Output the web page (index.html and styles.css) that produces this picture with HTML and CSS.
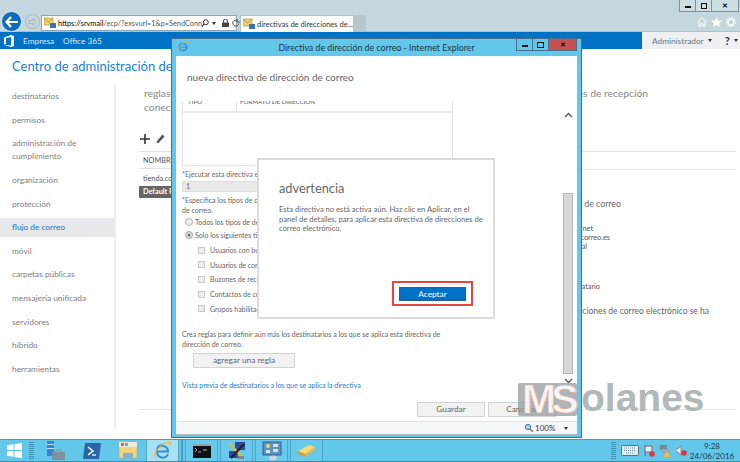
FILE: index.html
```html
<!DOCTYPE html>
<html lang="es">
<head>
    <meta charset="UTF-8">
    <title>directivas de direcciones de correo</title>
    <link rel="stylesheet" href="styles.css">
</head>
<body>
    <div class="ie-bar">
        <div class="nav-btns">
            <div class="back">
                <svg width="14" height="12" viewBox="0 0 14 12"><path d="M6 1L1.500 6 6 11M2 6H13" fill="none" stroke="#fff" stroke-width="2.200"/></svg>
            </div>
            <div class="forward">
                <svg width="9" height="8" viewBox="0 0 9 8"><path d="M5 .5L8 4 5 7.500V5.500H1V2.500H5Z" fill="none" stroke="#a9b6bc"/></svg>
            </div>
        </div>
        <div class="address">
            <svg class="mail-ico" width="13" height="12" viewBox="0 0 13 12"><rect x="0" y="1" width="9" height="7" fill="#f0d070" stroke="#b8962e" stroke-width=".7"/><path d="M0 1L4.500 5 9 1" fill="none" stroke="#a8862a" stroke-width=".7"/><rect x="6" y="6" width="6" height="5" fill="#3f6fb5"/></svg>
            <span class="url"><b>https://srvmail</b>/ecp/?exsvurl=1&amp;p=SendConn</span>
            <span class="addr-tools">
                <svg width="8" height="9" viewBox="0 0 8 9"><circle cx="4.800" cy="3.200" r="2.500" fill="none" stroke="#333"/><path d="M3 5L.8 8" stroke="#333" stroke-width="1.200"/></svg>
                <i class="mini-arrow"></i>
                <svg width="7" height="8" viewBox="0 0 7 8"><rect x="0" y="3.500" width="7" height="4.500" fill="#444"/><path d="M1.500 3.500V2a2 2 0 0 1 4 0V3.500" fill="none" stroke="#444"/></svg>
                <svg width="8" height="8" viewBox="0 0 8 8"><path d="M6.800 4.500A3 3 0 1 1 5.500 1.600M5 0V3H7.800" fill="none" stroke="#444"/></svg>
            </span>
        </div>
        <div class="tab">
            <svg class="mail-ico" width="13" height="12" viewBox="0 0 13 12"><rect x="0" y="1" width="9" height="7" fill="#f0d070" stroke="#b8962e" stroke-width=".7"/><path d="M0 1L4.500 5 9 1" fill="none" stroke="#a8862a" stroke-width=".7"/><rect x="6" y="6" width="6" height="5" fill="#3f6fb5"/></svg>
            <span class="tab-name">directivas de direcciones de...</span>
            <span class="tab-close">✕</span>
        </div>
        <div class="tab-new"></div>
        <div class="ie-right">
            <div class="win-btns">
                <span class="wb wb-min"><i></i></span>
                <span class="wb wb-max"><i></i></span>
                <span class="wb wb-close">✕</span>
            </div>
            <div class="ie-tools">
                <svg width="10" height="10" viewBox="0 0 10 10"><path d="M.5 5L5 .8 9.500 5M2 4.500V9.200H4V6.500H6V9.200H8V4.500" fill="none" stroke="#fff"/></svg>
                <svg width="11" height="10" viewBox="0 0 11 10"><path d="M5.500 0L7 3.600 11 3.800 7.900 6.200 9 10 5.500 7.900 2 10 3.100 6.200 0 3.800 4 3.600Z" fill="#fff"/></svg>
                <svg width="10" height="10" viewBox="0 0 10 10"><circle cx="5" cy="5" r="3" fill="none" stroke="#fff" stroke-width="1.300"/><circle cx="5" cy="5" r="4.400" fill="none" stroke="#fff" stroke-width="1.100" stroke-dasharray="1.500 1.500"/></svg>
            </div>
        </div>
    </div>

    <div class="o365-bar">
        <div class="o365-left">
            <svg width="11" height="12" viewBox="0 0 11 12"><path d="M0 2.500L7 0 10 1V11L7 12 0 9.700 7 10.500V2L2 3.200V8.800L0 9.700Z" fill="#fff"/></svg>
            <span class="o365-link current">Empresa</span>
            <span class="o365-link">Office 365</span>
        </div>
        <div class="o365-right">
            <span>Administrador</span><i class="mini-arrow"></i>
            <b class="help">?</b><i class="mini-arrow"></i>
        </div>
    </div>

    <h1 class="eac-title">Centro de administración de Exchange</h1>

    <div class="eac-main">
        <ul class="eac-nav">
            <li>destinatarios</li>
            <li>permisos</li>
            <li>administración de<br>cumplimiento</li>
            <li>organización</li>
            <li>protección</li>
            <li class="selected">flujo de correo</li>
            <li>móvil</li>
            <li>carpetas públicas</li>
            <li>mensajería unificada</li>
            <li>servidores</li>
            <li>híbrido</li>
            <li>herramientas</li>
        </ul>
        <div class="eac-list">
            <div class="sub-tabs">reglas<br>conectores de envío</div>
            <div class="list-tools">
                <svg width="10" height="10" viewBox="0 0 10 10"><path d="M5 0V10M0 5H10" stroke="#333" stroke-width="1.600"/></svg>
                <svg width="9" height="10" viewBox="0 0 9 10"><path d="M6.500 .5L8.500 2.500 3 8.500.5 9.500 1 7Z" fill="#555"/></svg>
            </div>
            <div class="list-head">NOMBRE</div>
            <div class="list-row">tienda.correo</div>
            <div class="list-row selected-row">Default Policy</div>
            <div class="list-end"></div>
        </div>
        <div class="eac-detail">
            <div class="sub-tabs d-right">conectores de recepción</div>
            <div class="detail-lines"></div>
            <div class="detail-title d-right">dirección de correo</div>
            <div class="detail-small d-right s1">tienda.net</div>
            <div class="detail-small d-right s2">tienda.correo.es</div>
            <div class="detail-small d-right s3">srvmail.local</div>
            <div class="detail-small d-right s4">destinatario</div>
            <div class="detail-text d-right">las direcciones de correo electrónico se ha</div>
            <div class="detail-end"></div>
        </div>
    </div>

    <div class="taskbar">
        <div class="start">
            <svg width="15" height="15" viewBox="0 0 15 15"><path d="M0 2.200L6.500 1.200V7H0ZM7.500 1L15 0V7H7.500ZM0 8H6.500V13.800L0 12.800ZM7.500 8H15V15L7.500 14Z" fill="#fff"/></svg>
        </div>
        <i class="gripper"></i>
        <div class="task-ico wide">
            <svg width="20" height="20" viewBox="0 0 20 20"><rect x="1" y="0" width="7" height="15" fill="#2f86d6"/><rect x="1" y="3" width="7" height="1" fill="#bfe0f7"/><rect x="1" y="7" width="7" height="1" fill="#bfe0f7"/><rect x="6" y="11" width="13" height="8" rx="1" fill="#7d929f"/><path d="M10 11V9H15V11" fill="none" stroke="#7d929f"/></svg>
        </div>
        <div class="task-ico wide">
            <svg width="20" height="18" viewBox="0 0 20 18"><path d="M3 1H19L17 17H1Z" fill="#2b64a8"/><path d="M6 5L11 9 6 13" fill="none" stroke="#fff" stroke-width="1.600"/><path d="M10 13H14" stroke="#fff" stroke-width="1.300"/></svg>
        </div>
        <div class="task-ico wide">
            <svg width="20" height="18" viewBox="0 0 20 18"><path d="M1 2H8L9.500 4H19V16H1Z" fill="#f3d37e" stroke="#c9a74e" stroke-width=".6"/><rect x="1" y="0" width="18" height="5" fill="#efe9d6"/><rect x="3" y="1" width="3" height="3" fill="#d8634c"/><rect x="7" y="1" width="3" height="3" fill="#6aa4d8"/><rect x="5" y="11" width="10" height="5" fill="#7fb2dd"/></svg>
        </div>
        <div class="task-ico running active">
            <svg width="19" height="19" viewBox="0 0 19 19"><path d="M3.500 10.500H15A5.700 5.700 0 0 0 4.500 7.500M15 13A5.700 5.700 0 0 1 4 11C3.500 8 5 5 9 3.800" fill="none" stroke="#2b8fd9" stroke-width="2"/><path d="M2 16C0 13 6 4 13 2 16 1 18 1 17.500 4" fill="none" stroke="#f0b429" stroke-width="1.200"/></svg>
        </div>
        <i class="task-sep"></i>
        <div class="task-ico running">
            <svg width="18" height="14" viewBox="0 0 18 14"><rect width="18" height="14" fill="#111"/><rect width="18" height="2" fill="#8fa5b3"/><path d="M2 4L4 6 2 8M5 8H8M10 6H14" fill="none" stroke="#ddd" stroke-width=".8"/></svg>
        </div>
        <div class="task-ico running">
            <svg width="20" height="20" viewBox="0 0 20 20"><rect x="8" y="1" width="10" height="8" fill="#2f4a9b"/><rect x="2" y="10" width="9" height="7" fill="#2f4a9b"/><path d="M2 2L16 17" stroke="#d8c13a" stroke-width="2.400"/><path d="M17 3L4 17" stroke="#222" stroke-width="2"/><rect x="11" y="15" width="6" height="3" fill="#888"/></svg>
        </div>
        <div class="task-ico running">
            <svg width="20" height="20" viewBox="0 0 20 20"><rect x="1" y="1" width="18" height="13" fill="#5d94c6" stroke="#2f5f8f"/><circle cx="6" cy="5" r="2" fill="#f1d36c"/><rect x="11" y="3" width="5" height="3" fill="#d4e6f4"/><rect x="11" y="8" width="5" height="3" fill="#d4e6f4"/><rect x="4" y="9" width="4" height="3" fill="#d4e6f4"/><ellipse cx="11" cy="17" rx="4" ry="2.500" fill="#cfd6da"/></svg>
        </div>
        <div class="task-ico running">
            <svg width="19" height="14" viewBox="0 0 19 14"><path d="M1 7L12 1 18 3 8 10Z" fill="#f4db78"/><path d="M1 7L8 10V13L1 10Z" fill="#c9a23e"/><path d="M8 10L18 3V6L8 13Z" fill="#e0bd55"/></svg>
        </div>
        <div class="tray">
            <i class="gripper"></i>
            <svg width="18" height="11" viewBox="0 0 18 11"><rect x=".5" y=".5" width="17" height="10" rx="1" fill="#dfeef5" stroke="#55707f"/><path d="M3 3H15M3 5.500H15M5 8H13" stroke="#6f8796" stroke-dasharray="1 1"/></svg>
            <svg width="11" height="12" viewBox="0 0 11 12"><path d="M1 0V11M1 1H8V7H1" fill="#eee" stroke="#667"/><circle cx="8" cy="9" r="2.800" fill="#d93a3a"/></svg>
            <svg width="11" height="12" viewBox="0 0 11 12"><rect x="0" y="0" width="7" height="5" fill="#789" /><rect x="2" y="4" width="7" height="4" fill="#9ab"/><path d="M7 6L10.500 12H3.500Z" fill="#f1c232"/></svg>
            <svg width="11" height="12" viewBox="0 0 11 12"><path d="M0 4H2L5 1V10L2 7H0Z" fill="#eee" stroke="#667" stroke-width=".6"/><circle cx="8" cy="8" r="2.800" fill="#d93a3a"/></svg>
            <div class="clock">9:28<br>24/06/2016</div>
        </div>
    </div>

    <!-- ventana emergente -->
    <div class="popup">
        <div class="popup-title">
            <svg class="popup-ico" width="12" height="12" viewBox="0 0 12 12"><ellipse cx="6" cy="6" rx="3.800" ry="3.600" fill="none" stroke="#2b8fd9" stroke-width="1.500"/><path d="M2.500 6H9.500" stroke="#2b8fd9"/><path d="M1 11C0 9 4 2 9 1 11 .5 12 1 11.500 3" fill="none" stroke="#e9b32c" stroke-width=".8"/></svg>
            <span>Directiva de dirección de correo - Internet Explorer</span>
            <div class="popup-btns">
                <span class="pb"><i class="pb-min"></i></span>
                <span class="pb"><i class="pb-max"></i></span>
                <span class="pb pb-close">✕</span>
            </div>
        </div>
        <div class="popup-page">
            <h2 class="popup-h">nueva directiva de dirección de correo</h2>
            <div class="popup-body">
                <div class="popup-scroll">
                    <div class="addr-table">
                        <div class="addr-head"><span class="col-tipo">TIPO</span><span class="col-format">FORMATO DE DIRECCIÓN</span></div>
                    </div>
                    <p class="lbl first">*Ejecutar esta directiva en este orden de prioridad:</p>
                    <div class="order-input">1</div>
                    <p class="lbl spec">*Especifica los tipos de destinatarios a los que se aplica esta directiva de dirección<br>de correo.</p>
                    <div class="radio-row"><i class="radio"></i>Todos los tipos de destinatarios</div>
                    <div class="radio-row"><i class="radio on"></i>Solo los siguientes tipos de destinatarios:</div>
                    <div class="checks">
                        <div class="check-row"><i class="check"></i>Usuarios con buzón</div>
                        <div class="check-row"><i class="check"></i>Usuarios de correo</div>
                        <div class="check-row"><i class="check"></i>Buzones de recursos</div>
                        <div class="check-row"><i class="check"></i>Contactos de correo</div>
                        <div class="check-row"><i class="check"></i>Grupos habilitados</div>
                    </div>
                    <p class="lbl rules">Crea reglas para definir aún más los destinatarios a los que se aplica esta directiva de<br>dirección de correo.</p>
                    <button class="btn add-rule">agregar una regla</button>
                    <a class="preview">Vista previa de destinatarios a los que se aplica la directiva</a>
                </div>
                <div class="scroll-bar">
                    <svg width="9" height="6" viewBox="0 0 9 6"><path d="M1 5L4.500 1.500 8 5" fill="none" stroke="#555" stroke-width="1.300"/></svg>
                    <div class="thumb"></div>
                    <svg width="9" height="6" viewBox="0 0 9 6"><path d="M1 1L4.500 4.500 8 1" fill="none" stroke="#555" stroke-width="1.300"/></svg>
                </div>
            </div>
            <div class="popup-actions">
                <button class="btn">Guardar</button>
                <button class="btn">Cancelar</button>
            </div>
        </div>
        <div class="popup-status">
            <svg width="8" height="8" viewBox="0 0 8 8"><circle cx="3" cy="3" r="2.600" fill="#bcd7ef" stroke="#2f6fb2"/><path d="M5 5L8 8" stroke="#775" stroke-width="1.300"/></svg>
            <span>100%</span>
            <i class="mini-arrow"></i>
        </div>
    </div>

    <!-- advertencia -->
    <div class="warn">
        <h3 class="warn-h">advertencia</h3>
        <p class="warn-text">Esta directiva no está activa aún. Haz clic en Aplicar, en el<br>panel de detalles, para aplicar esta directiva de direcciones de<br>correo electrónico.</p>
        <div class="warn-foot">
            <div class="red-mark"><button class="accept">Aceptar</button></div>
        </div>
    </div>

    <div class="watermark">
        <div class="wm-box"><span class="wm-ms">MS</span></div><span class="wm-text">olanes</span>
    </div>
</body>
</html>
```

FILE: styles.css
```css
* {
    box-sizing: border-box;
}
body {
    margin: 0;
    width: 740px;
    height: 462px;
    overflow: hidden;
    position: relative;
    display: flex;
    flex-direction: column;
    background: white;
    font-family: 'Lato', sans-serif;
    color: #666;
}
p, h1, h2, h3, ul {
    margin: 0;
    padding: 0;
    font-weight: normal;
}
i {
    display: block;
}
svg {
    flex: none;
}
.mini-arrow {
    width: 0;
    height: 0;
    border-left: 2.500px solid transparent;
    border-right: 2.500px solid transparent;
    border-top: 3px solid #333;
}

/* barra de internet explorer */
.ie-bar {
    height: 32px;
    flex: none;
    display: flex;
    align-items: flex-start;
    padding: 11px 0 0 1px;
    background: #c5d7de;
    border-bottom: 1px solid #a9c2cf;
}
.nav-btns {
    display: flex;
    align-items: center;
    gap: 3px;
    width: 40px;
}
.back {
    width: 21px;
    height: 21px;
    border-radius: 50%;
    background: #0d6dbb;
    border: 1px solid #dfeaf0;
    display: flex;
    align-items: center;
    justify-content: center;
}
.forward {
    width: 15px;
    height: 15px;
    border-radius: 50%;
    border: 1px solid #a9b6bc;
    display: flex;
    align-items: center;
    justify-content: center;
}
.address {
    width: 196px;
    height: 16px;
    margin-top: 4px;
    background: white;
    border: 1px solid #8fa6b2;
    display: flex;
    align-items: center;
    gap: 1px;
    padding-left: 2px;
    font-size: 7.300px;
    white-space: nowrap;
}
.url b {
    font-weight: normal;
    color: #000;
}
.url {
    width: 141px;
    flex: none;
    color: #555;
}
.addr-tools {
    display: flex;
    align-items: center;
    gap: 3px;
    margin-left: 1px;
}
.address .mini-arrow {
    margin-right: 3px;
}
.tab {
    width: 114px;
    height: 17px;
    margin: 4px 0 0 3px;
    background: white;
    border: 1px solid #a9c2cf;
    border-bottom: 0;
    display: flex;
    align-items: center;
    gap: 1px;
    padding-left: 2px;
    font-size: 7.500px;
    color: #333;
    white-space: nowrap;
}
.tab-close {
    margin-left: 3px;
    color: #999;
    font-size: 7px;
}
.tab-new {
    width: 12px;
    height: 16px;
    margin-top: 4px;
    background: #b9c6cc;
}
.ie-right {
    margin: -11px 0 0 auto;
    display: flex;
    flex-direction: column;
    align-items: flex-end;
}
.win-btns {
    display: flex;
    height: 12px;
    border: 1px solid #7f929c;
    border-top: 0;
    margin-right: 1px;
}
.wb {
    height: 11px;
    background: #ccdde4;
    border-right: 1px solid #7f929c;
    display: flex;
    align-items: center;
    justify-content: center;
    width: 16px;
}
.wb-close {
    width: 26px;
    border: 0;
    font-size: 7px;
    font-weight: bold;
    color: #111;
}
.wb-min i {
    width: 6px;
    height: 2px;
    margin-top: 3px;
    background: #111;
}
.wb-max i {
    width: 6px;
    height: 6px;
    border: 1.500px solid #111;
}
.ie-tools {
    display: flex;
    gap: 4px;
    margin: 5px 4px 0 0;
}

/* barra azul */
.o365-bar {
    height: 17px;
    flex: none;
    display: flex;
    justify-content: space-between;
    background: #0072c6;
    font-size: 8.300px;
}
.o365-left {
    display: flex;
    align-items: center;
    padding-left: 4px;
    color: #d7ebf9;
}
.o365-left .o365-link {
    margin-left: 8px;
}
.o365-left .o365-link + .o365-link {
    margin-left: 9px;
}
.current {
    position: relative;
}
.current::after {
    content: "";
    position: absolute;
    left: 12px;
    bottom: -4px;
    border-left: 2px solid transparent;
    border-right: 2px solid transparent;
    border-bottom: 2px solid white;
}
.o365-right {
    width: 98px;
    display: flex;
    align-items: center;
    gap: 4px;
    padding-left: 10px;
    background: #eef0f3;
    color: #6b7a86;
}
.help {
    margin-left: 9px;
    font-size: 11px;
    color: #333;
}

.eac-title {
    flex: none;
    height: 36px;
    padding: 9px 0 0 12px;
    font-size: 13px;
    color: #1a7fd1;
    white-space: nowrap;
}

/* contenido de atrás */
.eac-main {
    flex: 1;
    display: flex;
    min-height: 0;
}
.eac-nav {
    width: 116px;
    flex: none;
    list-style: none;
    height: 345px;
    border-right: 2px solid #eee;
    font-size: 8.300px;
    line-height: 13px;
    color: #808080;
}
.eac-nav li {
    padding: 5.300px 0 5.300px 12px;
}
.eac-nav .selected {
    margin: 2.300px 0;
    padding: 3px 0 3px 12px;
    background: #e6e8ea;
    color: #1b73ba;
}
.eac-list {
    width: 465px;
    flex: none;
    padding: 1px 0 0 23px;
    font-size: 7.300px;
    color: #555;
}
.sub-tabs {
    padding-left: 5px;
    font-size: 10.300px;
    line-height: 14px;
    color: #888;
    white-space: nowrap;
}
.list-tools {
    display: flex;
    align-items: center;
    gap: 6px;
    height: 14px;
    margin-top: 18px;
    padding-left: 1px;
}
.list-head {
    height: 18px;
    margin-top: 5px;
    padding: 4px 0 0 4px;
    border-top: 1px solid #e4e4e4;
    border-bottom: 1px solid #e4e4e4;
}
.list-row {
    height: 12px;
    margin-top: 4px;
    padding-left: 4px;
    line-height: 12px;
    white-space: nowrap;
    overflow: hidden;
}
.list-row + .list-row {
    margin-top: 1px;
}
.selected-row {
    background: #666;
    color: white;
    font-weight: bold;
}
.list-end {
    margin-top: 211px;
    border-top: 1px solid #e4e4e4;
}
.eac-detail {
    flex: 1;
    padding: 1px 4px 0 0;
    white-space: nowrap;
}
/* el texto empieza debajo de la ventana, se alinea por su final */
.d-right {
    display: flex;
    justify-content: flex-end;
}
.sub-tabs.d-right {
    width: 67px;
    height: 28px;
    padding-left: 0;
}
.detail-lines {
    height: 19px;
    margin-top: 37px;
    border-top: 1px solid #e4e4e4;
    border-bottom: 1px solid #e4e4e4;
}
.detail-title {
    width: 40px;
    margin: 27px 0 12.500px;
    font-size: 8.800px;
    line-height: 14px;
    color: #666;
}
.detail-small {
    font-size: 7.300px;
    line-height: 9px;
    color: #555;
}
.s1 {
    width: 12px;
}
.s2 {
    width: 29px;
}
.s3 {
    width: 6px;
}
.s4 {
    width: 19px;
    margin-top: 31px;
}
.detail-text {
    width: 128px;
    margin-top: 13.500px;
    font-size: 8.500px;
    line-height: 14px;
}
.detail-end {
    margin-top: 91px;
    border-top: 1px solid #e4e4e4;
}

/* barra de tareas */
.taskbar {
    height: 23px;
    flex: none;
    display: flex;
    align-items: center;
    padding-left: 7px;
    background: #63c7ea;
    border-top: 1px solid #6f8d9b;
    border-bottom: 1px solid #4d8aa5;
}
.start {
    display: flex;
    width: 22px;
}
.gripper {
    width: 5px;
    height: 18px;
    background: repeating-linear-gradient(to bottom, #3f93b3 0 1px, transparent 1px 2px);
}
.task-ico {
    height: 21px;
    display: flex;
    align-items: center;
    justify-content: center;
    width: 33px;
}
.task-ico.wide {
    width: 36px;
}
.start + .gripper + .task-ico {
    margin-left: 4px;
}
.running {
    margin-left: 2px;
    border-left: 1px solid #4fa7c7;
    border-right: 1px solid #4fa7c7;
    background: #67c9ec;
}
.active {
    margin-left: 0;
    background: #a8e1f5;
}
.task-sep {
    width: 2px;
    height: 21px;
    margin-left: 2px;
    background: #4d9dbd;
}
.tray {
    margin-left: auto;
    display: flex;
    align-items: center;
    gap: 5px;
}
.clock {
    width: 54px;
    margin-left: -6px;
    padding-right: 2px;
    text-align: center;
    font-size: 8px;
    line-height: 10px;
    color: #1b3a4a;
}

/* ventana emergente */
.popup {
    position: absolute;
    left: 171px;
    top: 38px;
    width: 411px;
    height: 400px;
    display: flex;
    flex-direction: column;
    background: #63c7ea;
    border: 1px solid #46708a;
    padding: 0 4px 2px;
}
.popup-title {
    height: 17px;
    flex: none;
    display: flex;
    align-items: center;
    justify-content: center;
    font-size: 8.800px;
    color: #17394b;
    position: relative;
}
.popup-ico {
    position: absolute;
    left: 1px;
    top: 2px;
}
.popup-btns {
    position: absolute;
    right: 0;
    top: 0;
    display: flex;
    height: 12px;
    border: 1px solid #46708a;
    border-top: 0;
}
.pb {
    width: 16px;
    border-right: 1px solid #46708a;
    display: flex;
    align-items: center;
    justify-content: center;
}
.pb-close {
    width: 27px;
    border: 0;
    background: #c75050;
    color: #111;
    font-size: 7px;
    font-weight: bold;
}
.pb-min {
    width: 6px;
    height: 2px;
    margin-top: 3px;
    background: #111;
}
.pb-max {
    width: 7px;
    height: 6px;
    border: 1.500px solid #111;
}
.popup-page {
    flex: 1;
    min-height: 0;
    display: flex;
    flex-direction: column;
    background: white;
}
.popup-h {
    flex: none;
    height: 45px;
    padding: 13px 0 0 11px;
    font-size: 10px;
    line-height: 16px;
    color: #666;
}
.popup-body {
    flex: 1;
    min-height: 0;
    display: flex;
    overflow: hidden;
}
.popup-scroll {
    width: 387px;
    flex: none;
    padding-left: 6px;
    font-size: 7px;
    line-height: 10px;
    color: #666;
    white-space: nowrap;
    overflow: hidden;
}
.addr-table {
    width: 271px;
    height: 65px;
    border: 1px solid #e2e2e2;
    border-top: 0;
}
/* la lista está desplazada: la cabecera queda cortada por arriba */
.addr-head {
    height: 12px;
    font-size: 6.200px;
    line-height: 5px;
    border-bottom: 2px solid #eaeaea;
    display: flex;
    color: #555;
}
.col-tipo {
    width: 54px;
    padding-left: 5px;
    border-right: 1px solid #e2e2e2;
}
.col-tipo, .col-format {
    margin-top: -2px;
}
.col-format {
    padding-left: 3px;
}
.lbl {
    color: #666;
}
.first {
    margin-top: 3px;
}
.order-input {
    width: 260px;
    height: 11px;
    margin-top: 2px;
    padding-left: 3px;
    background: #e9e9e9;
    border: 1px solid #ddd;
    line-height: 9px;
}
.spec {
    margin-top: 3px;
}
.radio-row {
    display: flex;
    align-items: center;
    gap: 2px;
    height: 13px;
    margin-left: 3px;
}
.radio {
    width: 8px;
    height: 8px;
    border-radius: 50%;
    background: #eee;
    border: 1px solid #b5b5b5;
}
.radio.on {
    background: #666;
    box-shadow: inset 0 0 0 1.500px #eee;
}
.checks {
    margin: 2px 0 0 16px;
}
.check-row {
    height: 14.600px;
    display: flex;
    align-items: center;
    gap: 5px;
}
.check {
    width: 7px;
    height: 7px;
    background: #eee;
    border: 1px solid #c9c9c9;
}
.rules {
    margin-top: 13px;
}
.btn {
    height: 15px;
    padding: 0;
    font-family: 'Lato', sans-serif;
    font-size: 8.300px;
    line-height: 11px;
    background: #f2f2f2;
    color: #666;
    border: 1px solid #cfd4d4;
}
.add-rule {
    display: block;
    width: 102px;
    margin: 4px 0 0 11px;
}
.preview {
    display: block;
    margin-top: 12px;
    color: #1b7fce;
}
.scroll-bar {
    width: 10px;
    display: flex;
    flex-direction: column;
    align-items: center;
    padding-top: 11px;
}
.thumb {
    width: 10px;
    height: 181px;
    flex: none;
    margin: 75px 0 4px;
    background: #d8d8d8;
    border: 1px solid #b6b6b6;
}
.popup-actions {
    flex: none;
    height: 19px;
    display: flex;
    gap: 3px;
    padding: 0 0 0 241px;
    align-items: flex-start;
}
.popup-actions .btn {
    width: 68px;
}
.popup-status {
    flex: none;
    height: 14px;
    display: flex;
    align-items: center;
    gap: 2px;
    padding-left: 349px;
    background: #f4f7f8;
    border-top: 1px solid #dfe3e5;
    border-bottom: 1px solid #b7bcbe;
    font-size: 8px;
    color: #333;
}
.popup-status .mini-arrow {
    margin-left: 7px;
}

/* advertencia */
.warn {
    position: absolute;
    left: 257px;
    top: 158px;
    width: 238px;
    height: 161px;
    display: flex;
    flex-direction: column;
    background: white;
    border: 2px solid #dcdcdc;
    padding: 19px 20px 11px 20px;
}
.warn-h {
    font-size: 12.800px;
    line-height: 18px;
    color: #666;
}
.warn-text {
    margin-top: 8px;
    font-size: 7.600px;
    line-height: 9.500px;
    color: #666;
    white-space: nowrap;
}
.warn-foot {
    margin-top: auto;
    display: flex;
    justify-content: flex-end;
}
.red-mark {
    padding: 3.500px 5px;
    border: 2px solid #e5473f;
    background: white;
}
.accept {
    display: block;
    width: 67px;
    height: 14px;
    padding: 0;
    background: #0072c6;
    color: white;
    border: 1px solid #2a5e99;
    font-family: 'Lato', sans-serif;
    font-size: 8.300px;
}

/* marca de agua */
.watermark {
    position: absolute;
    left: 518px;
    top: 378px;
    display: flex;
    align-items: flex-end;
    height: 40px;
}
.wm-box {
    width: 59px;
    height: 33px;
    margin-bottom: 2px;
    background: rgba(140, 150, 155, 0.7);
    border-radius: 2px;
    position: relative;
}
.wm-ms {
    position: absolute;
    left: 4px;
    top: -9px;
    font-family: 'Liberation Sans', sans-serif;
    font-weight: bold;
    font-size: 41px;
    line-height: 50px;
    letter-spacing: -5px;
    color: rgba(255, 255, 255, 0.9);
    -webkit-text-stroke: 0.6px #e8a890;
}
.wm-text {
    margin: 0 0 -2px 4px;
    font-family: 'Liberation Sans', sans-serif;
    font-weight: bold;
    font-size: 39px;
    line-height: 44px;
    color: #b0b8b8;
}
```
